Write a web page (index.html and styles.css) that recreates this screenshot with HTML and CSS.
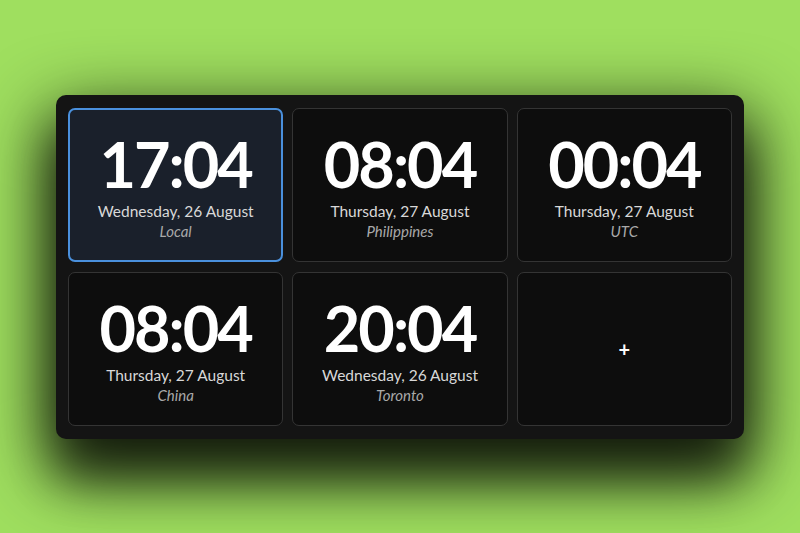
FILE: index.html
```html
<!DOCTYPE html>
<html>
<head>
<meta charset="utf-8">
<link rel="stylesheet" href="styles.css">
</head>
<body>
<div class="stage">
  <div class="panel">
    <div class="card active">
      <div class="time">17:04</div>
      <div class="date">Wednesday, 26 August</div>
      <div class="zone">Local</div>
    </div>
    <div class="card">
      <div class="time">08:04</div>
      <div class="date">Thursday, 27 August</div>
      <div class="zone">Philippines</div>
    </div>
    <div class="card">
      <div class="time">00:04</div>
      <div class="date">Thursday, 27 August</div>
      <div class="zone">UTC</div>
    </div>
    <div class="card">
      <div class="time">08:04</div>
      <div class="date">Thursday, 27 August</div>
      <div class="zone">China</div>
    </div>
    <div class="card">
      <div class="time">20:04</div>
      <div class="date">Wednesday, 26 August</div>
      <div class="zone">Toronto</div>
    </div>
    <div class="card add">+</div>
  </div>
</div>
</body>
</html>
```
FILE: styles.css
```css
html, body {
  margin: 0;
  padding: 0;
}
body {
  background: #9fdf5f;
  font-family: Lato, "Open Sans", sans-serif;
  color: #fff;
}
.stage {
  height: 533px;
  display: flex;
  align-items: center;
  justify-content: center;
}
.panel {
  width: 664px;
  padding: 13px 12px;
  background: #141414;
  border-radius: 10px;
  display: grid;
  grid-template-columns: repeat(3, 1fr);
  grid-template-rows: 154px 154px;
  gap: 10px 9px;
  box-shadow: 0 26px 70px 8px rgba(0, 0, 0, 0.85), 0 40px 45px rgba(0, 0, 0, 0.45);
}
.card {
  background: #0d0d0d;
  border: 1px solid #343434;
  border-radius: 7px;
  display: flex;
  flex-direction: column;
  align-items: center;
  justify-content: center;
  padding-top: 3px;
  box-sizing: border-box;
}
.card.active {
  background: #1a202b;
  border: 2px solid #4a90dc;
}
.time {
  font-size: 63px;
  font-weight: 700;
  line-height: 64px;
  letter-spacing: -2px;
}
.date {
  margin-top: 5px;
  font-size: 15.5px;
  line-height: 20px;
  color: #d8d8d8;
}
.zone {
  font-size: 15px;
  line-height: 20px;
  font-style: italic;
  color: #a9a9a9;
}
.add {
  font-size: 20px;
  font-weight: 700;
  padding-top: 0;
}
```
